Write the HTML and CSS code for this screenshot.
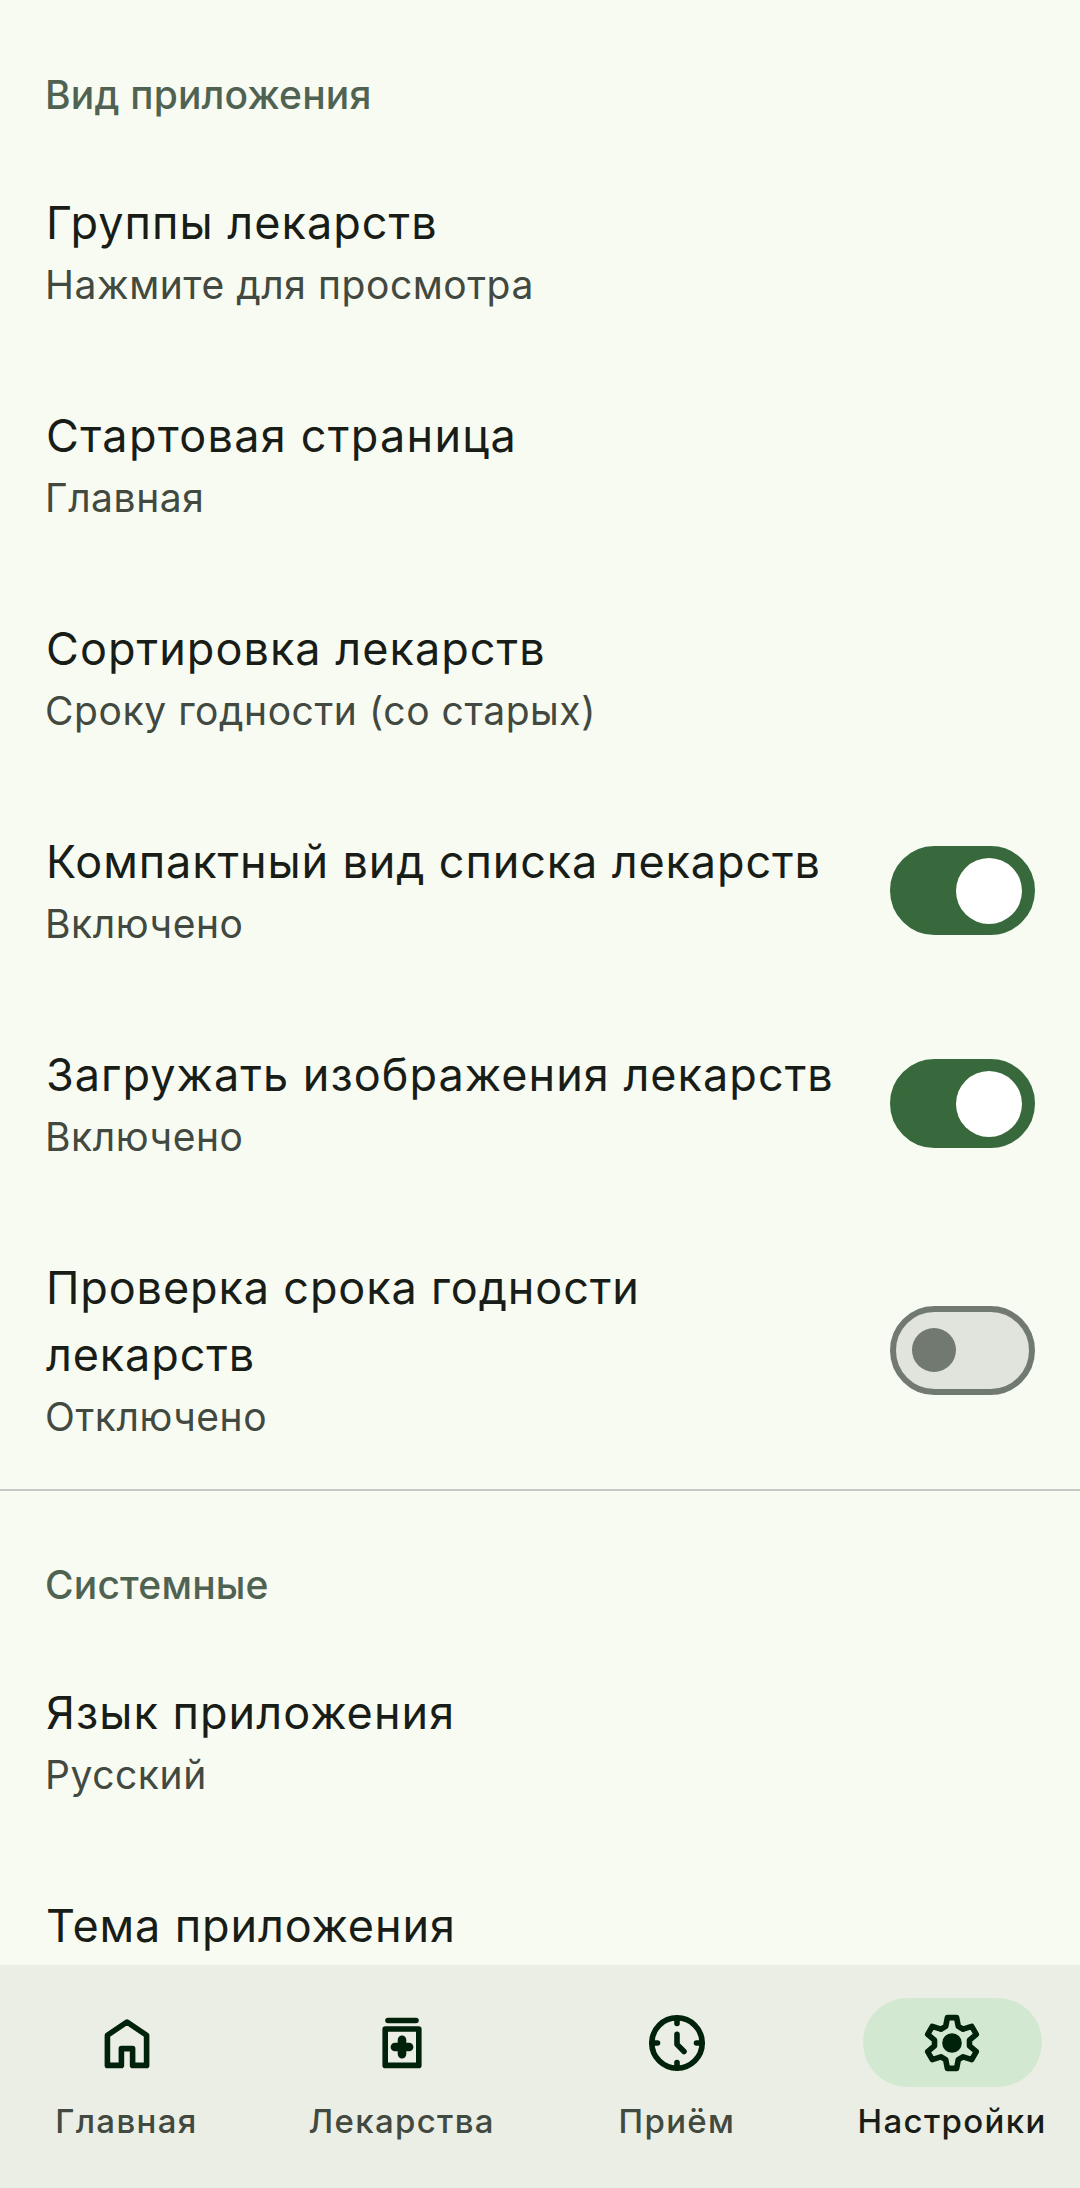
FILE: index.html
```html
<!DOCTYPE html>
<html lang="ru">
<head>
<meta charset="utf-8">
<title>Настройки</title>
<link rel="stylesheet" href="styles.css">
</head>
<body>
<main class="settings">
  <section class="group">
    <h2 class="group-title">Вид приложения</h2>
    <div class="item"><div class="text"><div class="title">Группы лекарств</div><div class="value">Нажмите для просмотра</div></div></div>
    <div class="item"><div class="text"><div class="title wide">Стартовая страница</div><div class="value">Главная</div></div></div>
    <div class="item"><div class="text"><div class="title">Сортировка лекарств</div><div class="value">Сроку годности (со старых)</div></div></div>
    <div class="item"><div class="text"><div class="title snug">Компактный вид списка лекарств</div><div class="value">Включено</div></div><div class="switch on"><span class="thumb"></span></div></div>
    <div class="item"><div class="text"><div class="title">Загружать изображения лекарств</div><div class="value">Включено</div></div><div class="switch on"><span class="thumb"></span></div></div>
    <div class="item"><div class="text"><div class="title snug">Проверка срока годности лекарств</div><div class="value">Отключено</div></div><div class="switch"><span class="thumb"></span></div></div>
  </section>
  <section class="group">
    <h2 class="group-title">Системные</h2>
    <div class="item"><div class="text"><div class="title">Язык приложения</div><div class="value">Русский</div></div></div>
    <div class="item"><div class="text"><div class="title snug">Тема приложения</div></div></div>
  </section>
</main>
<nav class="nav">
  <a class="tab">
    <span class="pill"><svg class="icon" viewBox="-34 -34 68 68"><path d="M-19.6 22.4V-7.8L0-21 19.6-7.8V22.4H5.6V5.6H-5.6V22.4Z"/></svg></span>
    <span class="label">Главная</span>
  </a>
  <a class="tab">
    <span class="pill"><svg class="icon" viewBox="-34 -34 68 68"><path d="M-14-22.5H14M-16.8-14H16.8V22.4H-16.8Z"/><path class="cross" d="M0-3.1V11.1M-7.1 4H7.1"/></svg></span>
    <span class="label">Лекарства</span>
  </a>
  <a class="tab">
    <span class="pill"><svg class="icon" viewBox="-34 -34 68 68"><circle r="25.2"/><path d="M0-25V-19.5M0 25V19.5M-25 0H-19.5M25 0H19.5M0-8.7V1.4L7 8.5"/></svg></span>
    <span class="label">Приём</span>
  </a>
  <a class="tab active">
    <span class="pill"><svg class="icon" viewBox="-34 -34 68 68"><path d="M-6.3-16.6-4.6-25.4H4.6L6.3-16.6 11.2-13.8 19.7-16.7 24.3-8.7 17.5-2.8V2.8L24.3 8.7 19.7 16.7 11.2 13.8 6.3 16.6 4.6 25.4H-4.6L-6.3 16.6-11.2 13.8-19.7 16.7-24.3 8.7-17.5 2.8V-2.8L-24.3-8.7-19.7-16.7-11.2-13.8Z"/><circle class="hub" r="9.8"/></svg></span>
    <span class="label">Настройки</span>
  </a>
</nav>
</body>
</html>
```
FILE: styles.css
```css
* { box-sizing: border-box; }
body { margin: 0; height: 2188px; overflow: hidden; display: flex; flex-direction: column; background: #f8fbf2; color: #191d17; font-family: Inter, "Noto Sans", sans-serif; }
.settings { flex: 1; min-height: 0; overflow: hidden; }
.group { padding-top: 67px; }
.group + .group { padding-top: 66px; border-top: 2px solid #c6cac6; }
.group-title { margin: 0 0 21px; padding: 0 45px; font-size: 39px; line-height: 56px; font-weight: 500; letter-spacing: 0.18px; color: #506352; }
.item { display: flex; align-items: center; padding: 45px 45px 43px; }
.text { flex: 1; }
.title { padding-left: 1px; font-size: 45px; line-height: 67px; letter-spacing: 1.03px; }
.title.snug { letter-spacing: 0.87px; }
.title.wide { letter-spacing: 1.27px; }
.value { font-size: 39px; line-height: 58px; letter-spacing: 0.56px; color: #424940; }
.switch { flex: none; width: 145px; height: 89px; margin-left: 45px; border: 6px solid #727971; border-radius: 45px; background: #e1e4dc; display: flex; align-items: center; padding: 0 16px; }
.thumb { width: 44px; height: 44px; border-radius: 50%; background: #727971; }
.switch.on { background: #38693c; border-color: #38693c; justify-content: flex-end; padding: 0 7px; }
.switch.on .thumb { width: 66px; height: 66px; background: #fff; }
.nav { flex: none; height: 223px; background: #ebeee5; display: grid; grid-template-columns: repeat(4, 253px); column-gap: 22.2px; padding-top: 33px; }
.tab { display: flex; flex-direction: column; align-items: center; gap: 12px; color: #424940; }
.pill { width: 179px; height: 89px; border-radius: 45px; display: flex; align-items: center; justify-content: center; color: #00210a; }
.icon { width: 68px; height: 68px; fill: none; stroke: currentColor; stroke-width: 5.6; stroke-linecap: round; stroke-linejoin: round; }
.icon .cross { stroke-width: 8.6; }
.icon .hub { fill: currentColor; stroke: none; }
.label { font-size: 33px; line-height: 45px; font-weight: 500; letter-spacing: 1.35px; white-space: nowrap; }
.active { color: #191d17; }
.active .pill { background: #d3e8d0; }
```
